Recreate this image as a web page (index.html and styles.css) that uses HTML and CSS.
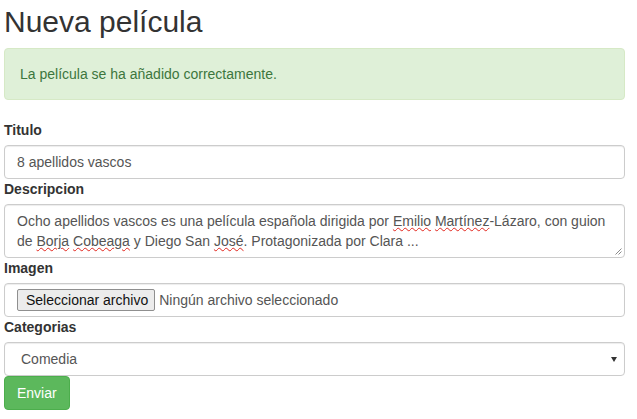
FILE: index.html
```html
<!DOCTYPE html>
<html lang="es">
<head>
<meta charset="utf-8">
<title>Nueva película</title>
<link rel="stylesheet" href="styles.css">
</head>
<body>
<div class="page">
  <h1 class="title">Nueva película</h1>
  <div class="alert">La película se ha añadido correctamente.</div>
  <form class="form">
    <label class="label">Titulo</label>
    <input class="control" type="text" value="8 apellidos vascos">
    <label class="label">Descripcion</label>
    <div class="control textarea">Ocho apellidos vascos es una película española dirigida por <span class="sp">Emilio</span> <span class="sp">Martínez</span>-Lázaro, con guion de <span class="sp">Borja</span> <span class="sp">Cobeaga</span> y Diego San <span class="sp">José</span>. Protagonizada por Clara ...<svg class="grip" width="7" height="7" viewBox="0 0 7 7"><path d="M6.5 0.5 L0.5 6.5 M6.5 3.5 L3.5 6.5" stroke="#8a8a8a" stroke-width="1" fill="none"/></svg></div>
    <label class="label">Imagen</label>
    <div class="control file">
      <span class="file-btn">Seleccionar archivo</span>
      <span class="file-name">Ningún archivo seleccionado</span>
    </div>
    <label class="label">Categorias</label>
    <div class="select-wrap">
      <select class="control select">
        <option>Comedia</option>
      </select>
    </div>
    <button class="btn" type="button">Enviar</button>
  </form>
</div>
</body>
</html>
```

FILE: styles.css
```css
html, body {
  margin: 0;
  padding: 0;
  background: #fff;
}
body {
  font-family: "Liberation Sans", Arial, sans-serif;
  font-size: 14px;
  line-height: 20px;
  color: #333;
}
.page {
  width: 621px;
  margin-left: 4px;
}
.title {
  font-size: 30px;
  line-height: 33px;
  font-weight: 500;
  margin: 5px 0 10px;
  color: #333;
}
.alert {
  padding: 15px;
  border: 1px solid #d6e9c6;
  border-radius: 4px;
  background: #dff0d8;
  color: #3c763d;
  margin-bottom: 20px;
}
.form {
  display: flex;
  flex-direction: column;
  margin: 0;
}
.label {
  display: block;
  font-weight: bold;
  margin-bottom: 5px;
  color: #333;
}
.control {
  display: block;
  box-sizing: border-box;
  width: 100%;
  height: 34px;
  padding: 6px 12px;
  font-family: "Liberation Sans", Arial, sans-serif;
  font-size: 14px;
  line-height: 20px;
  color: #555;
  background: #fff;
  border: 1px solid #ccc;
  border-radius: 4px;
  box-shadow: inset 0 1px 1px rgba(0,0,0,.075);
  margin: 0;
}
.textarea {
  position: relative;
  height: 54px;
  overflow: hidden;
}
.sp {
  text-decoration: underline wavy #e2261e;
  text-decoration-thickness: 1px;
  text-underline-offset: 1px;
}
.grip {
  position: absolute;
  right: 2px;
  bottom: 2px;
}
.file {
  display: flex;
  align-items: center;
  padding: 0 12px;
}
.file-btn {
  box-sizing: border-box;
  height: 22px;
  display: inline-flex;
  align-items: center;
  padding: 0 6px 0 8px;
  background: #ececec;
  border: 1px solid #8f8f8f;
  border-radius: 2px;
  color: #111;
  margin-right: 4px;
}
.file-name {
  color: #555;
}
.select-wrap {
  position: relative;
}
.select-wrap::after {
  content: "";
  position: absolute;
  right: 8px;
  top: 15px;
  border-left: 3px solid transparent;
  border-right: 3px solid transparent;
  border-top: 5px solid #333;
  pointer-events: none;
}
.select {
  -webkit-appearance: none;
  appearance: none;
  padding: 6px 12px 6px 16px;
}
.btn {
  align-self: flex-start;
  box-sizing: border-box;
  height: 34px;
  padding: 6px 12px;
  font-family: "Liberation Sans", Arial, sans-serif;
  font-size: 14px;
  line-height: 20px;
  color: #fff;
  background: #5cb85c;
  border: 1px solid #4cae4c;
  border-radius: 4px;
  margin: 0;
}
```
